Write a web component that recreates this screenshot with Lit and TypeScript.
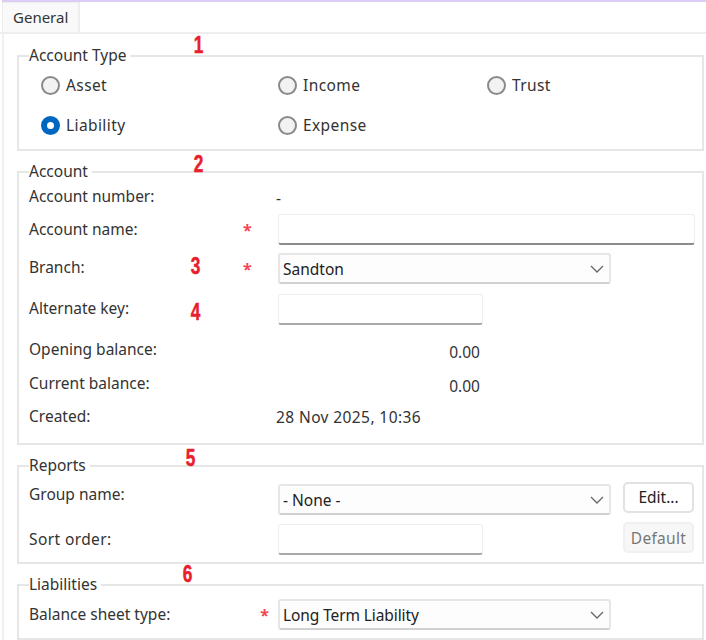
import { LitElement, html, css } from 'lit';
import { customElement } from 'lit/decorators.js';

const chevron = html`<svg class="chev" width="14" height="8" viewBox="0 0 14 8" fill="none">
  <path d="M1 1 L7 7 L13 1" stroke="#666" stroke-width="1.3"></path>
</svg>`;

@customElement('app-root')
export class AppRoot extends LitElement {
  static styles = css`
    :host {
      display: block;
      position: relative;
      width: 706px;
      height: 640px;
      overflow: hidden;
      background: #fff;
      font-family: 'Noto Sans', 'Open Sans', sans-serif;
      font-size: 15.5px;
      color: #333;
    }

    .topline {
      height: 2px;
      margin-left: 2px;
      background: #dccdf6;
    }

    .tabs {
      display: flex;
      height: 32px;
      border-bottom: 2px solid #eeeeee;
      box-sizing: border-box;
    }

    .tab {
      width: 78px;
      margin-left: 2px;
      padding-left: 10px;
      font-size: 15px;
      line-height: 28px;
      background: #f9f9f9;
      border-left: 1px solid #eee;
      border-right: 2px solid #eee;
      border-top: 1px solid #eee;
      box-sizing: border-box;
    }

    .pane {
      display: flex;
      flex-direction: column;
      gap: 11px;
      padding: 12px 2px 0 13px;
      border-left: 2px solid #f0f0f0;
      margin-left: 2px;
    }

    fieldset {
      margin: 0;
      padding: 0 0 0 10px;
      border: 2px solid #e6e6e6;
      min-width: 0;
    }

    legend {
      height: 20px;
      line-height: 18px;
      padding: 0 4px 0 0;
      margin-left: 0;
    }

    .radios {
      display: grid;
      grid-template-columns: 237px 209px 1fr;
      grid-auto-rows: 20px;
      row-gap: 20px;
      padding: 9px 0 14px 12px;
    }

    .radio {
      display: flex;
      align-items: center;
      gap: 6px;
      letter-spacing: 0.4px;
    }

    .dot {
      width: 19px;
      height: 19px;
      box-sizing: border-box;
      border-radius: 50%;
      background: #f2f2f2;
      border: 2px solid #8a8a8a;
    }

    .dot.on {
      background: #fff;
      border: 6px solid #0067c0;
    }

    .row {
      display: grid;
      grid-template-columns: 214px 35px 1fr;
      align-items: center;
    }

    .label {
      transform: translateY(-1px);
    }

    .label.up {
      transform: translateY(-2px);
    }

    .star {
      color: #f4464f;
      font-size: 16px;
      line-height: 1;
      font-weight: 700;
    }

    .star.far {
      justify-self: end;
      margin-right: 9px;
    }

    .input {
      height: 31px;
      box-sizing: border-box;
      background: #fff;
      border: 1px solid #eeeeee;
      border-bottom: 2px solid #8c8c8c;
      border-radius: 3px;
    }

    .input.short {
      width: 205px;
      border-bottom-color: #a8a8a8;
    }

    .input.full {
      width: 417px;
    }

    .select {
      display: flex;
      align-items: center;
      justify-content: space-between;
      width: 333px;
      height: 31px;
      box-sizing: border-box;
      padding: 0 5px 0 3px;
      background: #fdfdfd;
      border: 2px solid #e6e6e6;
      border-bottom-color: #d0d0d0;
      border-radius: 3px;
      color: #222;
    }

    .tight {
      letter-spacing: -0.1px;
    }

    .btn {
      width: 71px;
      height: 31px;
      box-sizing: border-box;
      margin-left: 12px;
      line-height: 26px;
      text-align: center;
      background: #fff;
      border: 2px solid #e2e2e2;
      border-radius: 5px;
      color: #222;
    }

    .btn.off {
      line-height: 28px;
      letter-spacing: 0.3px;
      background: #f7f7f7;
      border-color: #f0f0f0;
      color: #777;
    }

    .account .row.text {
      height: 20px;
    }

    .account {
      padding-bottom: 18px;
    }

    .account .r1 { margin-top: 4px; }
    .account .r2 { margin-top: 8px; }
    .account .r3 { margin-top: 8px; }
    .account .r4 { margin-top: 10px; }
    .account .r5 { margin-top: 13px; }
    .account .r6 { margin-top: 14px; }
    .account .r7 { margin-top: 13px; }

    .value {
      margin-left: -2px;
      letter-spacing: 0.4px;
      transform: translateY(1px);
    }

    .amount {
      width: 202px;
      text-align: right;
      transform: translateY(3px);
    }

    .reports .row {
      grid-template-columns: 249px 333px auto;
    }

    .reports {
      padding-bottom: 7px;
    }

    .reports legend {
      margin-bottom: 8px;
    }

    .reports .gap {
      margin-top: 9px;
    }

    .reports .btn {
      transform: translateY(-2px);
    }

    .reports .label.group {
      transform: translateY(-6px);
    }

    .reports .label.sort {
      letter-spacing: 0.4px;
      transform: translateY(-1px);
    }

    .liab {
      padding-bottom: 8px;
    }

    .liab .row {
      padding-top: 4px;
    }

    /* red callout numbers painted on top of the form */
    .num {
      position: absolute;
      color: #e8202e;
      font-family: 'Liberation Sans', sans-serif;
      font-weight: 700;
      font-size: 24px;
      line-height: 1;
      -webkit-text-stroke: 0.5px #e8202e;
      transform: scaleX(0.72);
    }

    .n1 { left: 192px; top: 33px; }
    .n2 { left: 192px; top: 152px; }
    .n3 { left: 189px; top: 254px; }
    .n4 { left: 189px; top: 300px; }
    .n5 { left: 184px; top: 446px; }
    .n6 { left: 181px; top: 562px; }
  `;

  render() {
    return html`
      <div class="topline"></div>
      <div class="tabs"><div class="tab">General</div></div>
      <div class="pane">
        <fieldset>
          <legend>Account Type</legend>
          <div class="radios">
            <div class="radio"><span class="dot"></span><span>Asset</span></div>
            <div class="radio"><span class="dot"></span><span>Income</span></div>
            <div class="radio"><span class="dot"></span><span>Trust</span></div>
            <div class="radio"><span class="dot on"></span><span>Liability</span></div>
            <div class="radio"><span class="dot"></span><span>Expense</span></div>
          </div>
        </fieldset>

        <fieldset class="account">
          <legend>Account</legend>
          <div class="row text r1">
            <span class="label">Account number:</span><span></span><span class="value">-</span>
          </div>
          <div class="row r2">
            <span class="label">Account name:</span><span class="star">*</span><div class="input full"></div>
          </div>
          <div class="row r3">
            <span class="label up">Branch:</span><span class="star">*</span>
            <div class="select"><span>Sandton</span>${chevron}</div>
          </div>
          <div class="row r4">
            <span class="label up">Alternate key:</span><span></span><div class="input short"></div>
          </div>
          <div class="row text r5">
            <span>Opening balance:</span><span></span><div class="amount">0.00</div>
          </div>
          <div class="row text r6">
            <span>Current balance:</span><span></span><div class="amount">0.00</div>
          </div>
          <div class="row text r7">
            <span>Created:</span><span></span><span class="value">28 Nov 2025, 10:36</span>
          </div>
        </fieldset>

        <fieldset class="reports">
          <legend>Reports</legend>
          <div class="row">
            <span class="label group">Group name:</span>
            <div class="select"><span>- None -</span>${chevron}</div>
            <div class="btn">Edit...</div>
          </div>
          <div class="row gap">
            <span class="label sort">Sort order:</span>
            <div class="input short"></div>
            <div class="btn off">Default</div>
          </div>
        </fieldset>

        <fieldset class="liab">
          <legend>Liabilities</legend>
          <div class="row">
            <span class="label">Balance sheet type:</span><span class="star far">*</span>
            <div class="select"><span class="tight">Long Term Liability</span>${chevron}</div>
          </div>
        </fieldset>
      </div>

      <span class="num n1">1</span>
      <span class="num n2">2</span>
      <span class="num n3">3</span>
      <span class="num n4">4</span>
      <span class="num n5">5</span>
      <span class="num n6">6</span>
    `;
  }
}

declare global {
  interface HTMLElementTagNameMap {
    'app-root': AppRoot;
  }
}
